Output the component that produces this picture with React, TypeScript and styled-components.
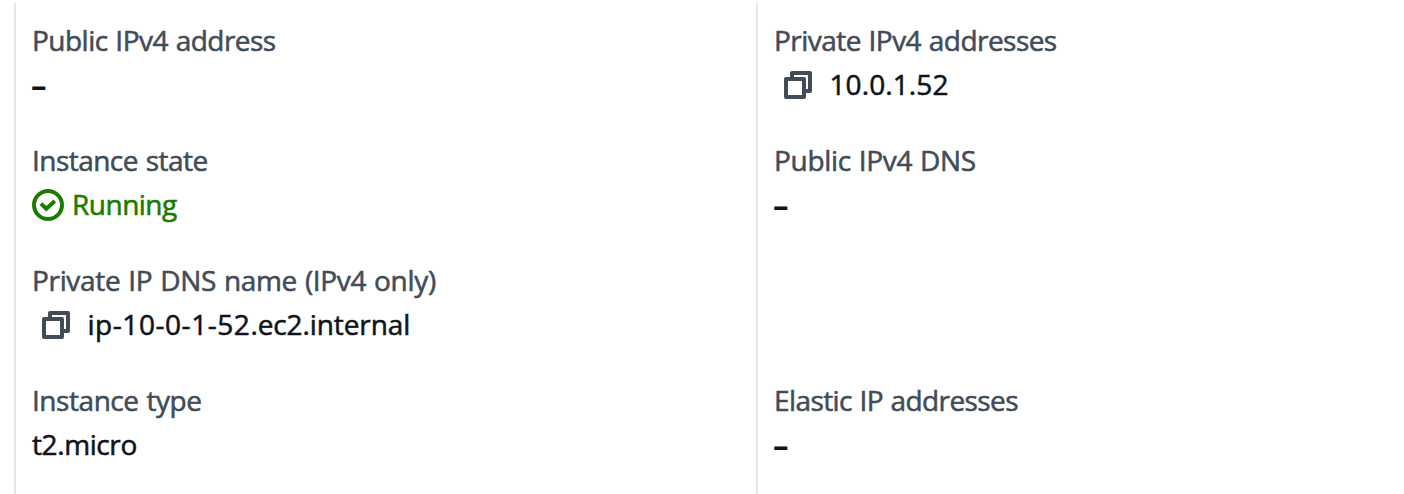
import React from "react";
import styled, { createGlobalStyle } from "styled-components";

const GlobalStyle = createGlobalStyle`
  body { margin: 0; background: #fff; }
`;

const Panel = styled.main`
  box-sizing: border-box;
  display: grid;
  grid-template-columns: 742px 1fr;
  height: 494px;
  padding: 3px 0 0 14px;
  overflow: hidden;
  background: #fff;
  font-family: "Open Sans", "Noto Sans", sans-serif;
  font-size: 28px;
  font-weight: 500;
  line-height: 40px;
`;

const Column = styled.dl`
  box-sizing: border-box;
  display: grid;
  grid-auto-rows: 120px;
  margin: 0;
  padding: 17px 0 0 16px;
  border-left: 2px solid #e2e7e7;
`;

const Field = styled.div`
  display: flex;
  flex-direction: column;
  align-items: flex-start;
  gap: 4px;
`;

const Label = styled.dt`
  color: #424c57;
  white-space: nowrap;
  word-spacing: 1px;
`;

const Value = styled.dd<{ $success?: boolean }>`
  display: flex;
  align-items: center;
  height: 40px;
  margin: 0;
  color: ${(p) => (p.$success ? "#1d7a00" : "#0f141a")};
  white-space: nowrap;
`;

const Text = styled.span<{ $spacing: number }>`
  letter-spacing: ${(p) => p.$spacing}px;
  -webkit-text-stroke: 0.55px currentColor;
`;

const EmptyMark = styled.span`
  margin: 2px 0 0 -1px;
  font-size: 31px;
  font-weight: 700;
`;

const CopyButton = styled.button`
  display: flex;
  margin: 2px 0 0;
  padding: 0 17.5px 0 10px;
  border: 0;
  background: none;
  color: #424c57;
`;

const StatusIcon = styled.svg`
  margin: 2px 8px 0 0;
`;

const Copy = () => (
  <CopyButton aria-label="Copy">
    <svg width="28" height="28" viewBox="0 0 28 28" fill="none" stroke="currentColor" strokeWidth="4" strokeLinejoin="round">
      <rect x="2" y="8" width="18" height="18" />
      <path d="M8 7V2h18v18h-5" />
    </svg>
  </CopyButton>
);

const Check = () => (
  <StatusIcon width="32" height="32" viewBox="0 0 32 32" fill="none" stroke="currentColor" strokeWidth="4">
    <circle cx="16" cy="16" r="14" />
    <path d="M8.9 14.6l5.4 5.1L22.8 12" />
  </StatusIcon>
);

type Run = [text: string, spacing: number];

type Item = {
  label: Run;
  value?: Run[];
  kind?: "copy" | "status";
};

const left: Item[] = [
  { label: ["Public IPv4 address", -0.52] },
  { label: ["Instance state", -0.53], value: [["Running", -0.5]], kind: "status" },
  {
    label: ["Private IP DNS name (IPv4 only)", -0.33],
    value: [["ip-10-0-1-52", 0.55], [".ec2.internal", -0.1]],
    kind: "copy",
  },
  { label: ["Instance type", -0.45], value: [["t2.micro", -0.4]] },
];

const right: (Item | null)[] = [
  { label: ["Private IPv4 addresses", -0.54], value: [["10.0.1.52", 0.1]], kind: "copy" },
  { label: ["Public IPv4 DNS", -0.32] },
  null,
  { label: ["Elastic IP addresses", -0.6] },
];

const Details = ({ items }: { items: (Item | null)[] }) => (
  <Column>
    {items.map((item, i) =>
      item ? (
        <Field key={i}>
          <Label>
            <Text $spacing={item.label[1]}>{item.label[0]}</Text>
          </Label>
          <Value $success={item.kind === "status"}>
            {item.kind === "copy" && <Copy />}
            {item.kind === "status" && <Check />}
            {item.value ? (
              item.value.map(([text, spacing]) => (
                <Text key={text} $spacing={spacing}>
                  {text}
                </Text>
              ))
            ) : (
              <EmptyMark>–</EmptyMark>
            )}
          </Value>
        </Field>
      ) : (
        <Field key={i} />
      )
    )}
  </Column>
);

export default function App() {
  return (
    <>
      <GlobalStyle />
      <Panel>
        <Details items={left} />
        <Details items={right} />
      </Panel>
    </>
  );
}
